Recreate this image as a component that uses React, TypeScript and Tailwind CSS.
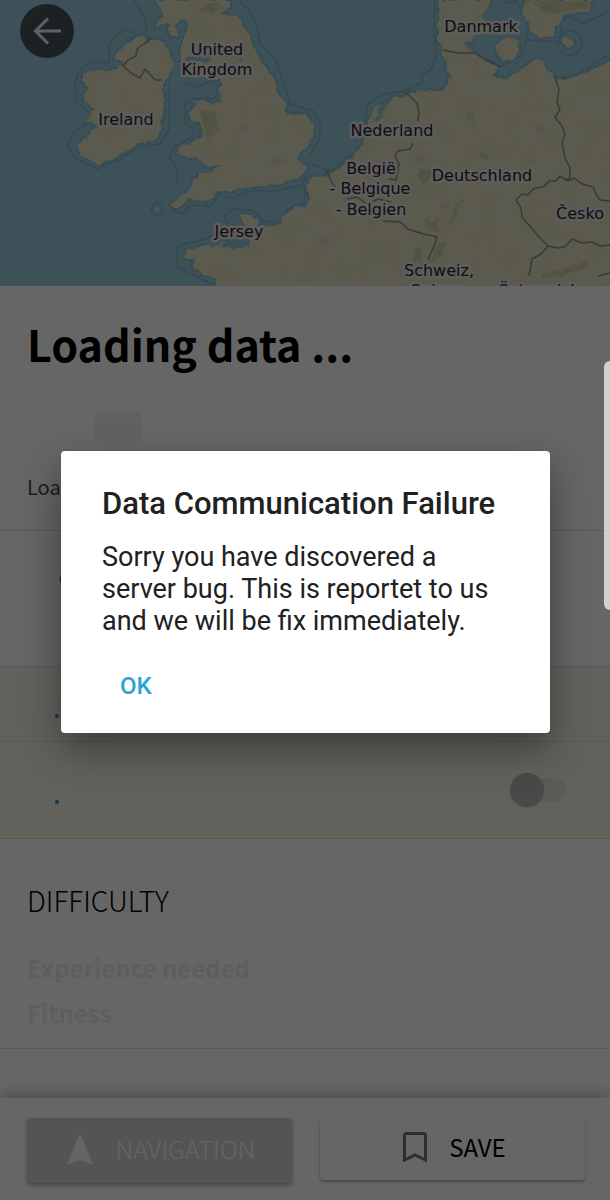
import React from "react";

type MapLabel = { text: string; x: number; y: number };

const labels: MapLabel[] = [
  { text: "United", x: 217, y: 55 },
  { text: "Kingdom", x: 217, y: 75 },
  { text: "Ireland", x: 126, y: 125 },
  { text: "Jersey", x: 239, y: 237 },
  { text: "Danmark", x: 481, y: 32 },
  { text: "Nederland", x: 392, y: 136 },
  { text: "België", x: 371, y: 174 },
  { text: "- Belgique", x: 370, y: 194 },
  { text: "- Belgien", x: 371, y: 215 },
  { text: "Deutschland", x: 482, y: 181 },
  { text: "Česko", x: 580, y: 219 },
  { text: "Schweiz,", x: 439, y: 276 },
  { text: "Suisse,", x: 439, y: 296 },
  { text: "Österreich", x: 539, y: 296 },
];

const landPaths: string[] = [
  // Ireland
  "M114 59 L118 51 L125 43 L137 38 L143 36 L148 42 L158 39 L165 43 L169 53 L174 62 L172 71 L164 80 L162 88 L164 98 L164 112 L162 126 L158 138 L147 142 L134 145 L123 153 L110 161 L98 164 L87 160 L79 151 L76 144 L85 139 L92 131 L98 125 L86 121 L90 114 L96 108 L85 103 L83 94 L88 89 L83 82 L83 73 L92 70 L104 71 L115 69 L123 64 Z",
  // Great Britain
  "M157 0 L228 0 L230 6 L221 13 L236 17 L245 27 L251 38 L256 53 L263 64 L274 76 L278 92 L286 105 L285 116 L295 114 L307 116 L314 125 L312 138 L304 149 L296 158 L300 164 L309 167 L302 175 L291 179 L281 184 L268 185 L258 187 L246 186 L235 191 L226 191 L217 190 L211 200 L200 201 L190 199 L182 205 L176 209 L170 204 L180 197 L188 191 L193 181 L200 173 L211 171 L222 164 L208 167 L199 159 L188 157 L177 154 L183 146 L194 141 L202 137 L200 121 L191 120 L188 113 L198 105 L190 100 L208 102 L222 103 L220 91 L222 80 L210 79 L194 72 L181 61 L180 46 L186 35 L190 24 L183 19 L175 25 L178 35 L172 38 L167 31 L171 23 L163 24 L155 26 L163 14 Z",
  // Continental Europe
  "M188 251 L200 245 L211 247 L219 243 L228 241 L232 249 L246 247 L250 244 L249 235 L243 225 L240 215 L252 215 L259 218 L258 226 L271 227 L283 222 L280 218 L292 210 L304 205 L310 199 L307 187 L310 179 L327 175 L342 166 L353 157 L360 147 L368 135 L368 121 L374 108 L389 100 L405 96 L416 92 L430 90 L442 91 L451 77 L445 66 L443 50 L438 40 L439 0 L491 0 L487 10 L481 18 L490 25 L480 33 L469 41 L471 48 L478 56 L486 62 L498 65 L493 75 L506 78 L519 71 L533 61 L543 60 L547 69 L555 77 L569 79 L586 73 L610 61 L625 61 L625 300 L223 300 L215 280 L206 275 L192 268 L195 260 L183 256 Z",
  // Danish isles and southern Sweden
  "M496 44 L507 37 L517 39 L519 49 L513 60 L505 61 L496 55 Z",
  "M526 0 L592 0 L589 11 L576 13 L563 15 L557 26 L552 36 L539 37 L530 31 L528 21 L522 14 Z",
  "M565 36 L573 39 L574 47 L568 48 L563 42 Z",
];

const inletPaths: string[] = [
  "M376 116 L383 103 L393 98 L386 107 L382 119 L374 121 Z",
  "M302 163 L312 161 L308 164 Z",
  "M222 246 L226 241 L245 242 L251 247 L238 249 Z",
  "M467 41 L474 47 L472 52 L464 44 Z",
  "M186 57 L210 57 L211 61 L190 62 Z",
];

const seaBorders: string[] = [
  "M134 0 L145 18 L147 29 L141 38 L128 29 L116 35 L109 44 L109 63 L91 62 L79 71 L75 83 L76 103 L89 112 L91 120 L74 132 L67 145 L75 158 L97 169 L121 159 L139 147 L160 144 L169 130 L169 100 L169 82",
  "M185 83 L197 87 L210 81 L219 87 L214 99 L199 98 L185 103 L185 124 L195 129 L189 139 L173 148 L169 158 L177 168 L177 186",
  "M172 210 L183 214 L190 205 L211 206 L219 194 L233 198 L248 191 L276 191 L301 185 L306 176",
  "M239 0 L250 12 L257 28 L260 44 L276 60 L283 82 L290 103 L302 108 L314 111 L320 122 L320 138 L309 157",
  "M228 226 L224 216 L233 209 L255 211 L263 221 L280 223 L288 209 L304 203 L306 183",
  "M176 252 L181 245 L206 239 L219 231 L236 224",
  "M176 252 L178 267 L191 274 L214 285",
  "M312 164 L330 171 L350 156 L363 143 L365 123 L368 104 L383 94 L405 91 L421 83 L423 74 L431 70 L436 57 L434 32 L435 0",
  "M506 3 L516 1 L525 16 L528 28 L526 40 L559 42 L562 33 L560 22 L568 16 L583 23 L600 16 L610 10",
  "M526 40 L521 56 L501 67 L486 57 M555 79 L573 76 L586 69 L601 60 L610 53",
];

const countryBorders: string[] = [
  "M151 38 L144 44 L137 49 L136 56 L128 60 L123 66 L131 73 L140 78 L145 69 L155 80 L162 80",
  "M443 50 L458 53 L475 53 L484 59 L501 67",
  "M405 92 L417 103 L419 113 L418 121 M413 143 L410 149 L398 151 L395 156 L399 164 L396 180 L389 179",
  "M327 171 L332 183 L336 188 M347 199 L357 197 L367 204 L378 199 L391 202 M383 221 L400 222 L408 229 L420 233 L437 237 L434 246 L428 260",
  "M555 77 L559 90 L557 102 L560 110 L555 117 L562 126 L565 134 L562 143 L565 158 L570 168 L570 178 L565 180",
  "M516 200 L522 194 L528 195 L533 189 L545 186 L549 181 L556 181 L560 176 L568 181 L574 178 L582 184 L593 187 L596 194 L600 200 L610 201",
  "M516 200 L521 208 L522 217 L529 225 L535 232 L542 240 L548 246 L557 248 L565 247 L572 239 L582 243 L592 242 L600 246 L610 245",
  "M548 246 L541 254 L532 259 L529 276 M610 273 L598 276",
];

const forests: string[] = [
  "M531 2 L590 1 L586 8 L565 12 L550 15 L541 9 Z",
  "M455 204 L465 199 L456 217 L448 224 Z",
  "M436 245 L447 240 L442 257 L431 264 Z",
  "M415 248 L424 246 L421 259 L410 262 Z",
  "M480 151 L491 154 L488 160 L479 157 Z",
  "M543 274 L568 268 L591 258 L588 267 L560 277 L540 279 Z",
  "M466 111 L475 115 L472 125 L467 118 Z",
  "M426 222 L439 219 L437 231 L430 232 Z",
  "M420 169 L433 172 L424 185 L417 178 Z",
  "M198 7 L219 2 L214 14 L201 12 Z",
  "M201 112 L216 111 L219 131 L205 137 Z",
  "M232 47 L244 51 L242 62 L233 58 Z",
];

function EuropeMap() {
  return (
    <svg
      viewBox="0 0 610 286"
      preserveAspectRatio="xMidYMin slice"
      className="block h-full w-full bg-[#98cadc]"
      role="img"
      aria-label="Map of Europe"
    >
      <defs>
        <filter id="coast" x="0" y="0" width="100%" height="100%">
          <feTurbulence type="fractalNoise" baseFrequency="0.12" numOctaves="3" seed="4" result="noise" />
          <feDisplacementMap in="SourceGraphic" in2="noise" scale="7" xChannelSelector="R" yChannelSelector="G" />
        </filter>
        <filter id="terrain" x="0" y="0" width="100%" height="100%">
          <feTurbulence type="fractalNoise" baseFrequency="0.05" numOctaves="4" seed="9" />
          <feColorMatrix values="0 0 0 0 0.72  0 0 0 0 0.74  0 0 0 0 0.48  0 3 0 0 -1.4" />
        </filter>
        <clipPath id="land">
          {landPaths.map((d) => (
            <path key={d} d={d} />
          ))}
        </clipPath>
      </defs>
      <g fill="none" stroke="#84b4ca" strokeWidth="1.5" strokeLinejoin="round">
        {seaBorders.map((d) => (
          <path key={d} d={d} />
        ))}
        <circle cx="157" cy="209" r="6" />
        <circle cx="570" cy="43" r="12" />
      </g>
      <g filter="url(#coast)">
        <g stroke="#84bdd4" strokeWidth="4" strokeLinejoin="round">
          {landPaths.map((d) => (
            <path key={d} d={d} />
          ))}
        </g>
        <g fill="#e4e1c2">
          {landPaths.map((d) => (
            <path key={d} d={d} />
          ))}
        </g>
        <g fill="#bfc392" opacity="0.6">
          {forests.map((d) => (
            <path key={d} d={d} />
          ))}
        </g>
        <g fill="#8fc4d8">
          {inletPaths.map((d) => (
            <path key={d} d={d} />
          ))}
        </g>
      </g>
      <g clipPath="url(#land)">
        <rect width="610" height="286" filter="url(#terrain)" opacity="0.5" />
      </g>
      <g fill="#d6cbd0" opacity="0.6">
        <ellipse cx="279" cy="162" rx="8" ry="4" />
        <ellipse cx="324" cy="241" rx="6" ry="4" />
        <ellipse cx="243" cy="129" rx="4" ry="4" />
        <ellipse cx="540" cy="130" rx="4" ry="5" />
        <ellipse cx="445" cy="206" rx="5" ry="4" />
        <ellipse cx="420" cy="160" rx="6" ry="5" />
      </g>
      <circle cx="157" cy="209" r="2" fill="#e6e3c0" />
      <g fill="none" stroke="#8f8f86" strokeWidth="1.5" strokeLinejoin="round">
        {countryBorders.map((d) => (
          <path key={d} d={d} />
        ))}
      </g>
      <g
        fill="#26262b"
        stroke="#ebe7e6"
        strokeWidth="5"
        strokeLinejoin="round"
        paintOrder="stroke"
        textAnchor="middle"
        className="font-['DejaVu_Sans',sans-serif] text-[16px]"
      >
        {labels.map((l) => (
          <text key={l.text} x={l.x} y={l.y}>
            {l.text}
          </text>
        ))}
      </g>
    </svg>
  );
}

function ActionRow({ children, className }: { children?: React.ReactNode; className: string }) {
  return (
    <div className={`flex items-center border-b border-[#e0e0d4] bg-[#f5f5e8] pr-11 pl-[55px] ${className}`}>
      <span className="mt-6 size-1 rounded-full bg-[#1f8fc4]" />
      {children}
    </div>
  );
}

export default function App() {
  return (
    <div className="relative flex min-h-screen flex-col overflow-hidden bg-white font-['Noto_Sans_CJK_SC',sans-serif] text-black">
      <header className="relative h-[286px]">
        <EuropeMap />
        <button
          type="button"
          aria-label="Back"
          className="absolute top-1 left-5 flex size-[54px] items-center justify-center rounded-full bg-[#4c5459]"
        >
          <svg viewBox="0 0 28 28" className="size-7" fill="none" stroke="#f2f2f2" strokeWidth="3">
            <path d="M28 14 H3 M15 1.500 L2.500 14 L15 26.500" />
          </svg>
        </button>
      </header>

      <main className="flex flex-1 flex-col">
        <section className="flex h-[245px] flex-col border-b border-[#dedede] px-[27px] pt-7">
          <h1 className="text-[43px] leading-[58px] font-bold">Loading data ...</h1>
          <div className="mt-[39px] ml-[68px] h-[30px] w-[46px] bg-[#f2f2f2]" />
          <p className="mt-8 text-[20px] leading-[28px] text-[#484848]">Loading</p>
        </section>

        <section className="flex h-[136px] items-start border-b border-[#dedede] px-[60px] pt-9">
          <svg viewBox="0 0 24 24" className="size-6" fill="none" stroke="#333333" strokeWidth="2">
            <circle cx="12" cy="12" r="11" />
            <path d="M12 6 V12 L16 15" />
          </svg>
        </section>

        <ActionRow className="h-[75px]" />
        <ActionRow className="h-[97px]">
          <label className="relative ml-auto flex h-[34px] w-14 items-center">
            <input type="checkbox" role="switch" aria-label="Offline" className="peer absolute inset-0 appearance-none" />
            <span className="ml-3 h-6 w-11 rounded-full bg-[#e9e3dd]" />
            <span className="absolute left-0 size-[34px] rounded-full bg-[#b6b6b6] shadow-sm peer-checked:left-6" />
          </label>
        </ActionRow>

        <section className="flex h-[210px] flex-col border-b border-[#dedede] px-[27px] pt-[41px]">
          <h2 className="text-[28px] leading-10 font-light">DIFFICULTY</h2>
          <p className="mt-[25px] text-[24px] leading-[45px] font-bold text-[#ebebeb]">Experience needed</p>
          <p className="text-[24px] leading-[45px] font-bold text-[#ebebeb]">Fitness</p>
        </section>
      </main>

      <footer className="flex h-[102px] gap-7 bg-white pt-5 pr-[25px] pl-[27px] shadow-[0_-2px_14px_rgba(0,0,0,0.3)]">
        <button
          type="button"
          disabled
          className="flex h-[65px] flex-1 items-center justify-center gap-[22px] rounded-sm bg-[#d2d2d2] pb-1 pl-1 text-[25px] font-light text-[#fafafa] shadow-[0_2px_4px_rgba(0,0,0,0.35)]"
        >
          <svg viewBox="0 0 26 32" className="h-8 w-[26px]" fill="currentColor">
            <path d="M13 0 L26 32 L13 27 L0 32 Z" />
          </svg>
          NAVIGATION
        </button>
        <button
          type="button"
          className="flex h-[62px] flex-1 items-center justify-center gap-[22px] rounded-sm bg-white pb-1 pl-1 text-[24px] shadow-[0_2px_3px_rgba(0,0,0,0.3)]"
        >
          <svg viewBox="0 0 24 30" className="h-[30px] w-6" fill="none" stroke="#737373" strokeWidth="3">
            <path d="M1.500 28 V3.500 Q1.500 1.500 3.500 1.500 H20.500 Q22.500 1.500 22.500 3.500 V28 L12 23 Z" />
          </svg>
          SAVE
        </button>
      </footer>

      <div className="absolute inset-0 flex items-center justify-center bg-black/60 pr-[60px] pb-4 pl-[61px]">
        <div
          role="dialog"
          aria-modal="true"
          aria-labelledby="dialog-title"
          className="w-full max-w-[490px] rounded-sm bg-white pt-8 pr-8 pb-[25px] pl-[41px] font-['Roboto',sans-serif] text-[#212121] shadow-[0_16px_40px_rgba(0,0,0,0.4)]"
        >
          <h2 id="dialog-title" className="text-[31px] leading-[42px] font-medium">
            Data Communication Failure
          </h2>
          <p className="mt-4 pr-2 text-[27px] leading-8">
            Sorry you have discovered a server bug. This is reportet to us and we will be fix immediately.
          </p>
          <button type="button" className="mt-[27px] h-11 px-[18px] text-[24px] font-medium text-[#2ba3d4]">
            OK
          </button>
        </div>
      </div>

      <div className="absolute top-[361px] right-0 h-[249px] w-[6px] rounded-l-lg bg-[#d0d0d0]" />
    </div>
  );
}
